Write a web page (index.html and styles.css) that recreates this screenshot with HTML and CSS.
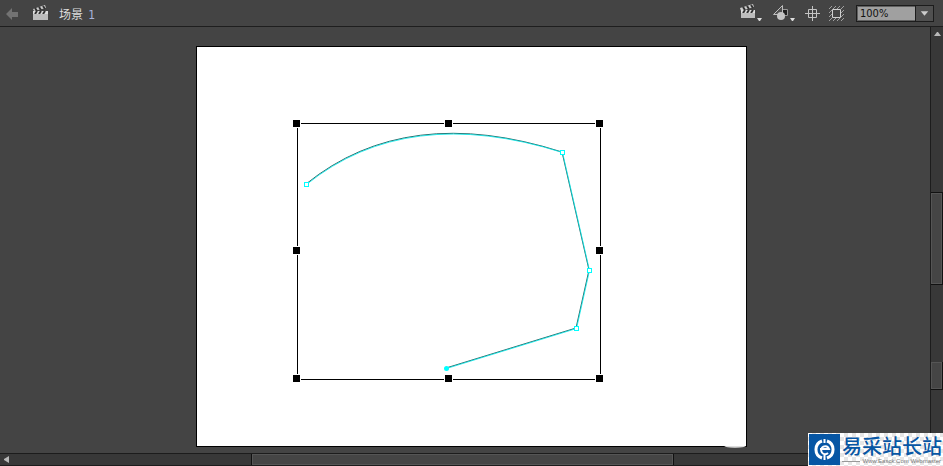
FILE: index.html
```html
<!DOCTYPE html>
<html lang="zh-CN">
<head>
    <meta charset="UTF-8">
    <meta name="viewport" content="width=device-width, initial-scale=1.0">
    <title>场景 1</title>
    <link rel="stylesheet" href="styles.css">
</head>
<body>
    <header class="edit-bar">
        <button type="button" class="icon-button" aria-label="返回">
            <svg width="12" height="14" viewBox="0 0 12 14"><path d="M0 8 6 2v4h6v5H6v3z" fill="#737373"/></svg>
        </button>
        <button type="button" class="scene">
            <svg width="16" height="16" viewBox="0 0 16 16">
                <path d="M1 4 13 0l1 3L2 6z" fill="#cfcfcf"/>
                <path d="m3 3 2 3M7 2l2 3M11 1l2 3" stroke="#333" stroke-width="2"/>
                <path d="M1 6h15v4H1z" fill="#dedede"/>
                <path d="m5 6-2 3M9 6 7 9M13 6l-2 3" stroke="#333" stroke-width="2"/>
                <path d="M1 9h15v6H1z" fill="#bdbdbd"/>
            </svg>
            <span>场景 <span class="scene-number">1</span></span>
        </button>
        <div class="tools">
            <button type="button" class="icon-button" aria-label="编辑场景">
                <svg width="23" height="18" viewBox="0 0 23 18">
                    <path d="M0 4 13 0l1 3L1 7z" fill="#cfcfcf"/>
                    <path d="m3 3 2 3M7 2l2 3M11 1l2 3" stroke="#333" stroke-width="2"/>
                    <path d="M1 6h14v3H1z" fill="#dedede"/>
                    <path d="m5 6-2 3M9 6 7 9M13 6l-2 3" stroke="#333" stroke-width="2"/>
                    <path d="M1 9h14v5H1z" fill="#bdbdbd"/>
                    <path d="M17 14h5l-2 3h-1z" fill="#ddd"/>
                </svg>
            </button>
            <button type="button" class="icon-button" aria-label="编辑元件">
                <svg width="24" height="18" viewBox="0 0 24 18">
                    <path d="M8.500 5.500h7v6h-7z" fill="#202020" stroke="#999"/>
                    <path d="M10.500 1.500v9h-9z" fill="#505050" stroke="#bdbdbd"/>
                    <circle cx="9" cy="12" r="4" fill="#c4c4c4"/>
                    <path d="M18 14h5l-2 3h-1z" fill="#ddd"/>
                </svg>
            </button>
            <button type="button" class="icon-button" aria-label="舞台居中">
                <svg width="15" height="15" viewBox="0 0 15 15" fill="none" stroke="#c4c4c4">
                    <path d="M3.500 3.500h8v8h-8zM7.500 0v15M0 7.500h15"/>
                </svg>
            </button>
            <button type="button" class="icon-button" aria-label="剪切舞台外内容">
                <svg width="15" height="15" viewBox="0 0 15 15" fill="none">
                    <path d="m0 3 3-3M0 7l3-3M4 3l3-3M8 3l3-3M12 3l3-3M0 11l3-3M0 15l3-3M4 15l3-3M8 15l3-3M12 15l3-3M12 7l3-3M12 11l3-3" stroke="#a0a0a0"/>
                    <path d="M3.500 3.500h8v8h-8z" fill="#444" stroke="#d0d0d0"/>
                </svg>
            </button>
            <div class="zoom">
                <select aria-label="缩放">
                    <option>50%</option>
                    <option selected>100%</option>
                    <option>200%</option>
                </select>
                <svg class="zoom-arrow" width="18" height="15" viewBox="0 0 18 15">
                    <path d="M5 5h8l-4 5z" fill="#ccc"/>
                </svg>
            </div>
        </div>
    </header>

    <main class="workspace">
        <div class="pasteboard">
            <div class="stage">
                <svg width="549" height="399" viewBox="0 0 549 399">
                    <!-- bounding box -->
                    <path d="M100.500 76.500h303v256h-303z" fill="none" stroke="#000"/>
                    <g fill="#000" stroke="#fff">
                        <rect x="95.500" y="72.500" width="8" height="8"/>
                        <rect x="247.500" y="72.500" width="8" height="8"/>
                        <rect x="398.500" y="72.500" width="8" height="8"/>
                        <rect x="95.500" y="199.500" width="8" height="8"/>
                        <rect x="398.500" y="199.500" width="8" height="8"/>
                        <rect x="95.500" y="327.500" width="8" height="8"/>
                        <rect x="247.500" y="327.500" width="8" height="8"/>
                        <rect x="398.500" y="327.500" width="8" height="8"/>
                    </g>
                    <!-- pen path: dark stroke with the selection line on top -->
                    <g fill="none">
                        <path d="M109 137Q210 55.500 365 105L392 223 379 281 249 321" stroke="#286868"/>
                        <path d="M109.500 137.500Q210 56.500 365.500 105.500L392.500 223.500 379.500 281.500 249.500 321.500" stroke="#00e8e8" stroke-opacity=".8"/>
                    </g>
                    <g fill="#fff" stroke="#00ffff">
                        <rect x="107.500" y="135.500" width="4" height="4"/>
                        <rect x="363.500" y="103.500" width="4" height="4"/>
                        <rect x="390.500" y="221.500" width="4" height="4"/>
                        <rect x="377.500" y="279.500" width="4" height="4"/>
                    </g>
                    <circle cx="249.500" cy="321.500" r="2.500" fill="#00ffff"/>
                </svg>
                <div class="stage-smudge"></div>
            </div>
        </div>
        <div class="scroll scroll-y">
            <button type="button" aria-label="向上滚动">
                <svg width="7" height="4" viewBox="0 0 7 4"><path d="M0 4h7L4 0H3z" fill="#b8b8b8"/></svg>
            </button>
            <div class="track-top"></div>
            <div class="thumb"></div>
            <div class="track-middle"></div>
            <div class="thumb thumb-end"></div>
            <div class="track-bottom"></div>
        </div>
    </main>

    <div class="scroll scroll-x">
        <button type="button" aria-label="向左滚动">
            <svg width="5" height="7" viewBox="0 0 5 7"><path d="M5 0v7L0 4V3z" fill="#b8b8b8"/></svg>
        </button>
        <div class="track-left"></div>
        <div class="thumb"></div>
        <div class="track-right"></div>
    </div>

    <div class="watermark">
        <svg class="watermark-logo" width="31" height="31" viewBox="0 0 31 31">
            <path d="M0 0h31v31H0z" fill="#0756a4"/>
            <g fill="none" stroke="#fff">
                <path d="M13 7a9 9 0 0 0 0 17M18 7a9 9 0 0 1 0 17" stroke-width="3"/>
                <path d="M11 15h9a4 4 0 1 0-1 4" stroke-width="2"/>
                <path d="M15.500 5v4M15.500 21v5" stroke-width="2"/>
            </g>
        </svg>
        <div class="watermark-text">
            <strong>易采站长站</strong>
            <small>Www.Easck.Com Webmaster</small>
        </div>
    </div>
</body>
</html>
```

FILE: styles.css
```css
* {
    box-sizing: border-box;
}
body {
    display: flex;
    flex-direction: column;
    height: 100vh;
    margin: 0;
    overflow: hidden;
    background-color: #444;
    color: #ddd;
    font-family: "Liberation Sans", "Noto Sans CJK SC", sans-serif;
    font-size: 12px;
}
button {
    display: flex;
    align-items: center;
    padding: 0;
    border: none;
    background: none;
    color: inherit;
    font: inherit;
}
svg {
    display: block;
    flex: none;
}

/* edit bar */
.edit-bar {
    display: flex;
    flex: none;
    align-items: center;
    gap: 14px;
    height: 27px;
    padding: 0 9px 0 6px;
    border-bottom: 1px solid #1e1e1e;
}
.scene {
    gap: 11px;
}
.scene-number {
    margin-left: 2px;
    color: #a9b4dc;
    font-family: "DejaVu Sans Condensed", "DejaVu Sans", sans-serif;
}
.tools {
    display: flex;
    align-items: center;
    gap: 9px;
    margin-left: auto;
}
.zoom {
    position: relative;
    width: 78px;
    height: 17px;
    margin-left: 3px;
    border: 1px solid #1c1c1c;
}
.zoom select {
    display: block;
    width: 100%;
    height: 100%;
    padding: 0 20px 0 2px;
    border: 1px solid #606060;
    border-radius: 0;
    appearance: none;
    background-color: #a0a0a0;
    color: #111;
    font-family: "DejaVu Sans Condensed", "DejaVu Sans", sans-serif;
    font-size: 11px;
    line-height: 13px;
}
.zoom-arrow {
    position: absolute;
    top: 0;
    right: 0;
    border-left: 1px solid #1c1c1c;
    background-color: #505050;
    pointer-events: none;
}

/* stage */
.workspace {
    display: flex;
    flex: 1;
    min-height: 0;
}
.pasteboard {
    display: flex;
    flex: 1;
    justify-content: center;
    align-items: flex-start;
    min-width: 0;
    padding: 19px 0 0 13px;
    overflow: hidden;
}
.stage {
    position: relative;
    border: 1px solid #000;
    background-color: #fff;
}
.stage-smudge {
    position: absolute;
    right: 0;
    bottom: -2px;
    width: 22px;
    height: 5px;
    border-radius: 0 0 50% 50%;
    background-image: linear-gradient(#fff 50%, #aaa);
}

/* scroll bars */
.scroll {
    display: flex;
    flex: none;
    background-color: #383838;
}
.scroll button {
    flex: none;
    justify-content: center;
}
.scroll-y {
    flex-direction: column;
    width: 13px;
    border-left: 1px solid #1c1c1c;
}
.scroll-y button {
    height: 14px;
}
.scroll-x {
    height: 13px;
    border-top: 1px solid #1c1c1c;
    border-bottom: 1px solid #1c1c1c;
}
.scroll-x button {
    width: 13px;
}
.thumb {
    border: 1px solid #111;
    background-color: #454545;
    box-shadow: inset 0 0 0 1px #555;
}
.scroll-y .thumb {
    flex: 92;
    border-left: none;
}
.scroll-y .thumb-end {
    flex: 28;
    border-top: none;
}
.scroll-x .thumb {
    flex: 421;
    border-top: none;
    border-bottom: none;
}
.track-top {
    flex: 152;
}
.track-middle {
    flex: 77;
}
.track-bottom {
    flex: 63;
}
.track-left {
    flex: 239;
}
.track-right {
    flex: 270;
}

/* site mark over the bottom right corner */
.watermark {
    position: absolute;
    right: 0;
    bottom: 0;
    display: flex;
    gap: 2px;
    height: 33px;
    padding: 1px 0 0 1px;
    background: repeating-conic-gradient(#e6e6e6 0 25%, #fff 0 50%) 0 0 / 8px 8px;
    color: #0756a4;
}
.watermark-text {
    display: flex;
    flex-direction: column;
    width: 101px;
    white-space: nowrap;
}
.watermark-text strong {
    font-family: "Noto Sans CJK SC", sans-serif;
    font-size: 20px;
    font-weight: 500;
    line-height: 24px;
}
.watermark-text small {
    display: flex;
    align-items: center;
    gap: 2px;
    padding-right: 2px;
    color: #777;
    font-size: 6px;
    line-height: 6px;
}
.watermark-text small::before {
    content: "";
    flex: 1;
    height: 1px;
    background-color: #999;
}
```
